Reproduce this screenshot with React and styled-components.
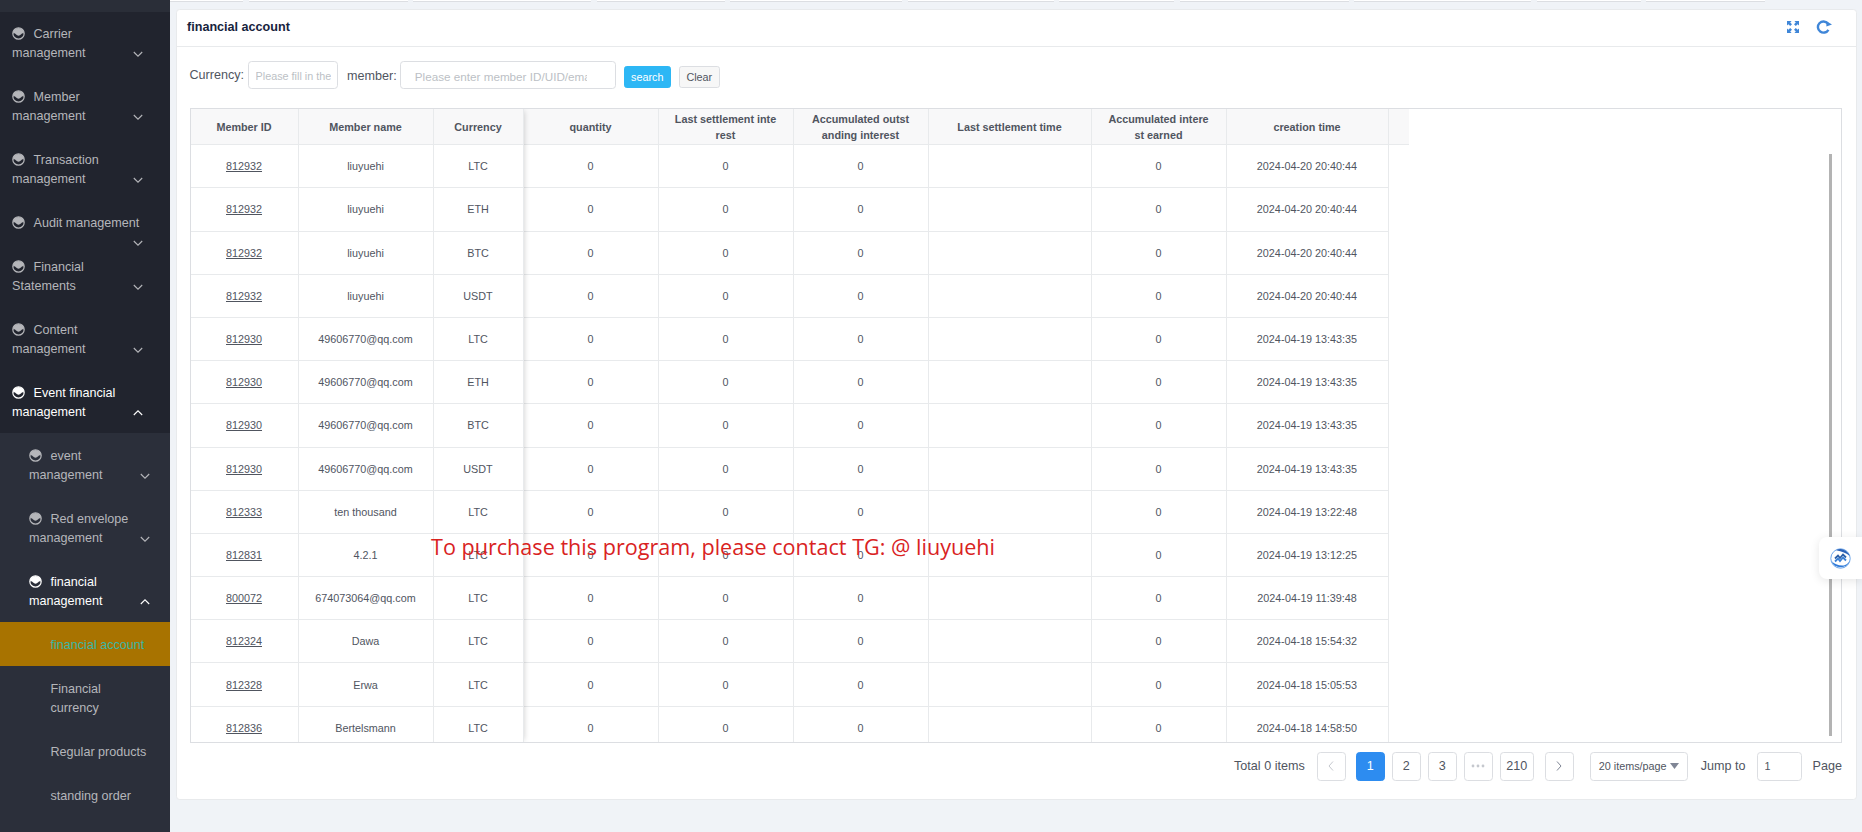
import React from "react";
import styled, { createGlobalStyle } from "styled-components";

const Global = createGlobalStyle`
  html, body { margin: 0; padding: 0; height: 100%; overflow: hidden; }
  body { font-family: "Liberation Sans", Arial, sans-serif; color: #50555f; background: #f0f3f7; }
  * { box-sizing: border-box; }
`;

const Page = styled.div`
  display: flex;
  height: 100vh;
  position: relative;
  overflow: hidden;
`;

const Sidebar = styled.aside`
  flex: none;
  width: 170px;
  height: 100%;
  background: #2b2f3a;
  overflow: hidden;
`;
const SideTop = styled.div`
  height: 13px;
  background: #2a2e38;
`;
const NavList = styled.div`
  margin-top: -1.5px;
  background: #21242e;
`;
const NavItem = styled.div`
  padding: 13.3px ${p => (p.$sub ? "20px" : "27px")} 11.7px ${p => (p.$sub ? "29px" : "12px")};
  ${p => p.$compact && "height: 44px;"}
  font-size: 12.6px;
  line-height: 19px;
  color: ${p => (p.$open ? "#ffffff" : "#b5b6ba")};
  background: ${p => (p.$sub ? "#2b2f3a" : "#21242e")};
  &::after { content: ""; display: block; clear: both; }
`;
const Leaf = styled.div`
  padding: 13.3px 21px 11.7px 50.5px;
  font-size: 12.6px;
  line-height: 19px;
  color: ${p => (p.$active ? "#3bb6a6" : "#b5b6ba")};
  background: ${p => (p.$active ? "#a87300" : "#2b2f3a")};
`;
const SubMenu = styled.div`
  background: #2b2f3a;
`;
const NavIcon = styled.svg`
  width: 13px;
  height: 13px;
  margin-right: 8.5px;
  vertical-align: -2px;
`;
const Chevron = styled.svg`
  float: right;
  width: 10px;
  height: 19px;
`;

const Main = styled.main`
  flex: 1;
  min-width: 0;
  display: flex;
  flex-direction: column;
  background: #f0f3f7;
`;
const TabStrip = styled.div`
  display: flex;
  gap: 5.5px;
  height: 2px;
  flex: none;
`;
const TabSliver = styled.div`
  flex: none;
  height: 2px;
  background: #fff;
  border-bottom: 1px solid #dcdee2;
`;
const Card = styled.section`
  height: 791px;
  margin: 7px 5px 0 6px;
  background: #fff;
  border: 1px solid #e8eaec;
  border-radius: 3.6px;
  display: flex;
  flex-direction: column;
`;
const CardHead = styled.header`
  flex: none;
  height: 37px;
  padding: 0 24px 3px 10px;
  display: flex;
  align-items: center;
  justify-content: space-between;
  border-bottom: 1px solid #e8eaec;
`;
const CardTitle = styled.h2`
  margin: 0;
  font-size: 12.6px;
  font-weight: 700;
  color: #17233d;
`;
const HeadIcons = styled.div`
  display: flex;
  align-items: center;
  gap: 17px;
`;
const CardBody = styled.div`
  flex: 1;
  min-height: 0;
  padding: 14px 14px 0 12.5px;
  display: flex;
  flex-direction: column;
`;
const FilterRow = styled.form`
  display: flex;
  align-items: center;
  height: 28px;
  margin: 0;
`;
const FilterLabel = styled.label`
  font-size: 12.6px;
  color: #50555f;
  margin-right: ${p => p.$gap}px;
  margin-left: ${p => p.$left || 0}px;
  margin-top: ${p => p.$shift}px;
`;
const TextInput = styled.input`
  width: ${p => p.$w}px;
  height: 28px;
  padding: 2px ${p => p.$padRight}px 0 ${p => p.$pad}px;
  font-family: inherit;
  font-size: ${p => p.$size}px;
  border: 1px solid #dcdee2;
  border-radius: 3.6px;
  background: #fff;
  outline: none;
  &::placeholder { color: #bcbfc5; opacity: 1; }
`;
const SearchButton = styled.button`
  height: 22px;
  width: 47px;
  margin: 4px 0 0 8px;
  padding: 0;
  font-family: inherit;
  font-size: 10.8px;
  color: #fff;
  background: #2db7f5;
  border: 1px solid #2db7f5;
  border-radius: 2.7px;
`;
const ClearButton = styled(SearchButton)`
  width: 41px;
  color: #50555f;
  background: #f7f7f7;
  border-color: #dcdee2;
`;

const TableBox = styled.div`
  flex: none;
  margin-top: 19px;
  height: 635px;
  width: 1652px;
  position: relative;
  display: flex;
  overflow: hidden;
  border: 1px solid #dcdee2;
`;
const FixedPane = styled.div`
  flex: none;
  position: relative;
  z-index: 1;
  background: #fff;
  box-shadow: 2px 0 6px -2px rgba(0, 0, 0, 0.2);
`;
const ScrollPane = styled.div`
  flex: 1;
  min-width: 0;
`;
const GridRow = styled.div`
  display: grid;
  grid-template-columns: ${p => p.$cols};
  height: ${p => (p.$head ? "36.2px" : "43.2px")};
  width: max-content;
  background: ${p => (p.$head ? "#f8f8f9" : "#fff")};
`;
const HeadCell = styled.div`
  display: flex;
  align-items: center;
  justify-content: center;
  padding: 0 16px;
  text-align: center;
  font-size: 10.8px;
  font-weight: 700;
  line-height: 16px;
  word-break: break-all;
  color: #50555f;
  border-right: 1px solid #e8eaec;
  border-bottom: 1px solid #e8eaec;
`;
const HeadGutter = styled.div`
  border-bottom: 1px solid #e8eaec;
`;
const Cell = styled.div`
  display: flex;
  align-items: center;
  justify-content: center;
  font-size: 10.8px;
  color: #50555f;
  white-space: nowrap;
  border-right: 1px solid #e8eaec;
  border-bottom: 1px solid #e8eaec;
`;
const IdLink = styled.a`
  color: #50555f;
  text-decoration: underline;
`;
const ScrollThumb = styled.div`
  position: absolute;
  z-index: 2;
  top: 45px;
  right: 9px;
  width: 3px;
  height: 582px;
  background: #b3b3b3;
`;

const Pager = styled.nav`
  display: flex;
  align-items: center;
  justify-content: flex-end;
  height: 29px;
  margin-top: 8.5px;
  font-size: 12.6px;
  color: #50555f;
`;
const PagerText = styled.span`
  margin-left: ${p => p.$left || 0}px;
`;
const PageBtn = styled.button`
  height: 29px;
  min-width: ${p => p.$w || 29}px;
  margin-left: ${p => p.$left ?? 7}px;
  padding: 0;
  display: flex;
  align-items: center;
  justify-content: center;
  font-family: inherit;
  font-size: 12.6px;
  color: ${p => (p.$active ? "#fff" : "#50555f")};
  background: ${p => (p.$active ? "#2d8cf0" : "#fff")};
  border: 1px solid ${p => (p.$active ? "#2d8cf0" : "#dcdee2")};
  border-radius: 3.6px;
`;
const PageSelect = styled.div`
  width: 98px;
  height: 29px;
  margin-left: 16px;
  padding: 0 8px;
  display: flex;
  align-items: center;
  justify-content: space-between;
  font-size: 10.8px;
  color: #50555f;
  border: 1px solid #dcdee2;
  border-radius: 3.6px;
`;
const JumpInput = styled.input`
  width: 45px;
  height: 29px;
  margin-left: 11px;
  padding: 0 7px;
  font-family: inherit;
  font-size: 10.8px;
  color: #50555f;
  border: 1px solid #dcdee2;
  border-radius: 3.6px;
  outline: none;
`;

const Watermark = styled.div`
  position: absolute;
  left: 431px;
  top: 532px;
  z-index: 5;
  font-family: "Open Sans", "Noto Sans", sans-serif;
  font-size: 21.6px;
  line-height: 30px;
  color: #d9231f;
  white-space: nowrap;
`;
const FloatWidget = styled.div`
  position: absolute;
  z-index: 6;
  right: 0;
  top: 537px;
  width: 43px;
  height: 42px;
  display: flex;
  align-items: center;
  padding-left: 11px;
  background: #fff;
  border-radius: 8px 0 0 8px;
  box-shadow: 0 2px 10px rgba(0, 0, 0, 0.1);
`;

const HalfMoon = () => (
  <NavIcon viewBox="0 0 13 13" fill="none">
    <circle cx="6.5" cy="6.5" r="5.7" stroke="currentColor" strokeWidth="1.2" />
    <path d="M1 6.5A5.5 5.5 0 0 1 12 6.5Q10.3 5.6 9.2 7.3Q6.5 10.2 3.8 7.3Q2.7 5.6 1 6.5Z" fill="currentColor" />
  </NavIcon>
);
const Arrow = ({ up }) => (
  <Chevron viewBox="0 0 10 19" fill="none" stroke="currentColor" strokeWidth="1.1">
    <path d={up ? "M.8 12L5 7.8L9.2 12" : "M.8 8L5 12.2L9.2 8"} />
  </Chevron>
);
const Expand = () => (
  <svg width="12" height="12" viewBox="0 0 12 12" fill="#3f86d8">
    <path d="M0 0H4.6L3.2 1.4L5 3.2L3.2 5L1.4 3.2L0 4.6Z" />
    <path d="M12 0V4.6L10.6 3.2L8.8 5L7 3.2L8.8 1.4L7.4 0Z" />
    <path d="M0 12V7.4L1.4 8.8L3.2 7L5 8.8L3.2 10.6L4.6 12Z" />
    <path d="M12 12H7.4L8.8 10.6L7 8.8L8.8 7L10.6 8.8L12 7.4Z" />
  </svg>
);
const Refresh = () => (
  <svg width="16" height="14" viewBox="0 0 16 14" fill="none">
    <path d="M11.8 3.4A5.6 5.6 0 1 0 12.4 9.8" stroke="#3f86d8" strokeWidth="2.4" />
    <path d="M16 4.4L10.4 6.6L10.4 1.2Z" fill="#3f86d8" />
  </svg>
);
const Swirl = () => (
  <svg width="21" height="21" viewBox="0 0 21 21" fill="none">
    <circle cx="10.5" cy="10.5" r="9.7" stroke="#5b9be6" strokeWidth="0.9" />
    <path d="M6 2.2A9.6 9.6 0 0 1 19.6 8Q15 3.6 6 2.2Z" fill="#2a62b8" />
    <path d="M1.6 13Q6 18 14 17.4Q17.5 16.6 19.6 13A9.6 9.6 0 0 1 1.6 13Z" fill="#2f7ad8" />
    <path d="M5 10.5L8 7.5L10 10L13 6.5L16 9.5" stroke="#2b5fa8" strokeWidth="1.8" />
    <path d="M5 13.5L8 10.5L10 13L13 9.5L16 12.5" stroke="#3a80d6" strokeWidth="1.8" />
  </svg>
);
const SmallChevron = ({ d, color }) => (
  <svg width="8" height="12" viewBox="0 0 8 12" fill="none" stroke={color} strokeWidth="1">
    <path d={d} />
  </svg>
);

const topItems = [
  { label: "Carrier management" },
  { label: "Member management" },
  { label: "Transaction management" },
  { label: "Audit management", compact: true },
  { label: "Financial Statements" },
  { label: "Content management" },
];

const tabs = [73, 159, 178, 128, 172, 146, 115, 169, 177, 104, 119];
const fixedCols = "108px 135px 90px";
const restCols = "135px 135px 135px 163px 135px 162px";

const rows = [
  ["812932", "liuyuehi", "LTC", "2024-04-20 20:40:44"],
  ["812932", "liuyuehi", "ETH", "2024-04-20 20:40:44"],
  ["812932", "liuyuehi", "BTC", "2024-04-20 20:40:44"],
  ["812932", "liuyuehi", "USDT", "2024-04-20 20:40:44"],
  ["812930", "49606770@qq.com", "LTC", "2024-04-19 13:43:35"],
  ["812930", "49606770@qq.com", "ETH", "2024-04-19 13:43:35"],
  ["812930", "49606770@qq.com", "BTC", "2024-04-19 13:43:35"],
  ["812930", "49606770@qq.com", "USDT", "2024-04-19 13:43:35"],
  ["812333", "ten thousand", "LTC", "2024-04-19 13:22:48"],
  ["812831", "4.2.1", "LTC", "2024-04-19 13:12:25"],
  ["800072", "674073064@qq.com", "LTC", "2024-04-19 11:39:48"],
  ["812324", "Dawa", "LTC", "2024-04-18 15:54:32"],
  ["812328", "Erwa", "LTC", "2024-04-18 15:05:53"],
  ["812836", "Bertelsmann", "LTC", "2024-04-18 14:58:50"],
];

export default function App() {
  return (
    <Page>
      <Global />
      <Sidebar>
        <SideTop />
        <NavList>
          {topItems.map(it => (
            <NavItem key={it.label} $compact={it.compact}>
              <HalfMoon />
              {it.label}
              <Arrow />
            </NavItem>
          ))}
          <NavItem $open>
            <HalfMoon />
            Event financial management
            <Arrow up />
          </NavItem>
          <SubMenu>
            <NavItem $sub>
              <HalfMoon />
              event management
              <Arrow />
            </NavItem>
            <NavItem $sub>
              <HalfMoon />
              Red envelope management
              <Arrow />
            </NavItem>
            <NavItem $sub $open>
              <HalfMoon />
              financial management
              <Arrow up />
            </NavItem>
            <Leaf $active>financial account</Leaf>
            <Leaf>Financial currency</Leaf>
            <Leaf>Regular products</Leaf>
            <Leaf>standing order</Leaf>
          </SubMenu>
        </NavList>
      </Sidebar>
      <Main>
        <TabStrip>
          {tabs.map((w, i) => (
            <TabSliver key={i} style={{ width: w }} />
          ))}
        </TabStrip>
        <Card>
          <CardHead>
            <CardTitle>financial account</CardTitle>
            <HeadIcons>
              <Expand />
              <Refresh />
            </HeadIcons>
          </CardHead>
          <CardBody>
            <FilterRow>
              <FilterLabel $gap={4} $shift={-1}>Currency:</FilterLabel>
              <TextInput $w={90} $pad={6.5} $padRight={6.5} $size={10.8} placeholder="Please fill in the" />
              <FilterLabel $gap={3} $left={9} $shift={1}>member:</FilterLabel>
              <TextInput $w={216} $pad={14} $padRight={28} $size={11.7} placeholder="Please enter member ID/UID/email" />
              <SearchButton type="button">search</SearchButton>
              <ClearButton type="button">Clear</ClearButton>
            </FilterRow>
            <TableBox>
              <FixedPane>
                <GridRow $head $cols={fixedCols}>
                  <HeadCell>Member ID</HeadCell>
                  <HeadCell>Member name</HeadCell>
                  <HeadCell>Currency</HeadCell>
                </GridRow>
                {rows.map((r, i) => (
                  <GridRow key={i} $cols={fixedCols}>
                    <Cell><IdLink>{r[0]}</IdLink></Cell>
                    <Cell>{r[1]}</Cell>
                    <Cell>{r[2]}</Cell>
                  </GridRow>
                ))}
              </FixedPane>
              <ScrollPane>
                <GridRow $head $cols={`${restCols} 20px`}>
                  <HeadCell>quantity</HeadCell>
                  <HeadCell>Last settlement interest</HeadCell>
                  <HeadCell>Accumulated outstanding interest</HeadCell>
                  <HeadCell>Last settlement time</HeadCell>
                  <HeadCell>Accumulated interest earned</HeadCell>
                  <HeadCell>creation time</HeadCell>
                  <HeadGutter />
                </GridRow>
                {rows.map((r, i) => (
                  <GridRow key={i} $cols={restCols}>
                    <Cell>0</Cell>
                    <Cell>0</Cell>
                    <Cell>0</Cell>
                    <Cell />
                    <Cell>0</Cell>
                    <Cell>{r[3]}</Cell>
                  </GridRow>
                ))}
              </ScrollPane>
              <ScrollThumb />
            </TableBox>
            <Pager>
              <PagerText>Total 0 items</PagerText>
              <PageBtn $left={12}>
                <SmallChevron d="M6 1.5L2 6L6 10.5" color="#c5c8ce" />
              </PageBtn>
              <PageBtn $left={10} $active>1</PageBtn>
              <PageBtn>2</PageBtn>
              <PageBtn>3</PageBtn>
              <PageBtn>
                <svg width="14" height="4" viewBox="0 0 14 4" fill="#c5c8ce">
                  <circle cx="2" cy="2" r="1.4" />
                  <circle cx="7" cy="2" r="1.4" />
                  <circle cx="12" cy="2" r="1.4" />
                </svg>
              </PageBtn>
              <PageBtn $w={34}>210</PageBtn>
              <PageBtn $left={11}>
                <SmallChevron d="M2 1.5L6 6L2 10.5" color="#808695" />
              </PageBtn>
              <PageSelect>
                20 items/page
                <svg width="9" height="6" viewBox="0 0 9 6" fill="#808695">
                  <path d="M0 0H9L4.5 6Z" />
                </svg>
              </PageSelect>
              <PagerText $left={13}>Jump to</PagerText>
              <JumpInput defaultValue="1" />
              <PagerText $left={11}>Page</PagerText>
            </Pager>
          </CardBody>
        </Card>
      </Main>
      <Watermark>To purchase this program, please contact TG: @ liuyuehi</Watermark>
      <FloatWidget>
        <Swirl />
      </FloatWidget>
    </Page>
  );
}
